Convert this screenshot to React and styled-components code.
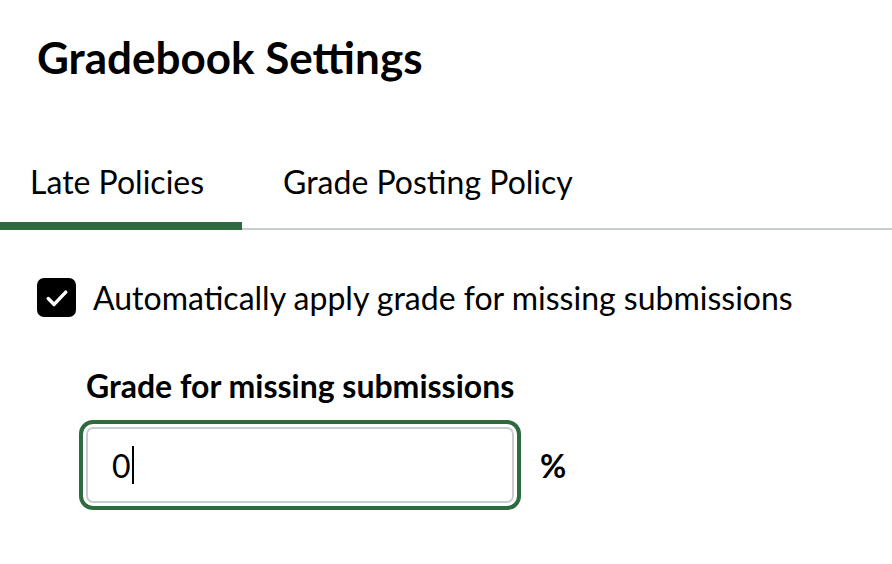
import React, { useState } from "react";
import styled, { createGlobalStyle } from "styled-components";

const GlobalStyle = createGlobalStyle`
  html, body {
    margin: 0;
    padding: 0;
    background: #ffffff;
  }
  body {
    font-family: Lato, "Liberation Sans", sans-serif;
    color: #000000;
  }
`;

const GREEN = "#2d6a3e";

const Page = styled.div`
  width: 892px;
  min-height: 564px;
  overflow: hidden;
`;

const Title = styled.h1`
  margin: 0;
  padding: 31px 0 0 37px;
  font-size: 44px;
  font-weight: 700;
  line-height: 53px;
`;

const TabList = styled.div`
  display: flex;
  margin-top: 79px;
  border-bottom: 2px solid #c7cdd1;
`;

const Tab = styled.button`
  position: relative;
  border: none;
  background: none;
  padding: 0 41px 27px 41px;
  font-family: inherit;
  font-size: 32px;
  line-height: 38px;
  color: #000;
  cursor: pointer;

  &:first-child {
    padding-left: 30px;
    padding-right: 38px;
  }

  &::after {
    content: "";
    position: absolute;
    left: 0;
    right: 0;
    bottom: -2px;
    height: 8px;
    background: ${(p) => (p.$active ? GREEN : "transparent")};
  }
`;

const Panel = styled.div`
  padding: 48px 0 0 37px;
`;

const CheckRow = styled.label`
  display: flex;
  align-items: center;
  gap: 17px;
  font-size: 32px;
  line-height: 38px;
  cursor: pointer;
`;

const Box = styled.span`
  display: flex;
  align-items: center;
  justify-content: center;
  flex-shrink: 0;
  width: 39px;
  height: 39px;
  border-radius: 7px;
  background: ${(p) => (p.$checked ? "#000" : "#fff")};
  border: 2px solid #000;
  box-sizing: border-box;
`;

const Field = styled.div`
  padding: 50px 0 0 86px;
`;

const FieldLabel = styled.div`
  font-size: 32px;
  font-weight: 700;
  line-height: 38px;
`;

const InputRow = styled.div`
  display: flex;
  align-items: center;
  gap: 26px;
  margin-top: 22px;
`;

const TextBox = styled.div`
  display: flex;
  align-items: center;
  box-sizing: border-box;
  width: 428px;
  height: 76px;
  padding-left: 24px;
  border: 2px solid #c7cdd1;
  border-radius: 7px;
  outline: 4px solid ${GREEN};
  outline-offset: 3px;
  font-size: 32px;
`;

const Caret = styled.span`
  display: inline-block;
  width: 2px;
  height: 38px;
  margin-left: 1px;
  background: #000;
`;

const Suffix = styled.span`
  font-size: 32px;
  font-weight: 700;
`;

const App = () => {
  const [tab, setTab] = useState(0);
  const [checked, setChecked] = useState(true);

  return (
    <Page>
      <GlobalStyle />
      <Title>Gradebook Settings</Title>
      <TabList role="tablist">
        {["Late Policies", "Grade Posting Policy"].map((t, i) => (
          <Tab key={t} role="tab" $active={tab === i} onClick={() => setTab(i)}>
            {t}
          </Tab>
        ))}
      </TabList>
      <Panel>
        <CheckRow onClick={() => setChecked(!checked)}>
          <Box $checked={checked}>
            {checked && (
              <svg width="28" height="28" viewBox="0 0 24 24" fill="none" stroke="#fff" strokeWidth="3" strokeLinecap="round" strokeLinejoin="round">
                <path d="M4.5 12.5l5 5L19.5 7" />
              </svg>
            )}
          </Box>
          Automatically apply grade for missing submissions
        </CheckRow>
      </Panel>
      <Field>
        <FieldLabel>Grade for missing submissions</FieldLabel>
        <InputRow>
          <TextBox role="textbox">
            0<Caret />
          </TextBox>
          <Suffix>%</Suffix>
        </InputRow>
      </Field>
    </Page>
  );
};

export default App;
